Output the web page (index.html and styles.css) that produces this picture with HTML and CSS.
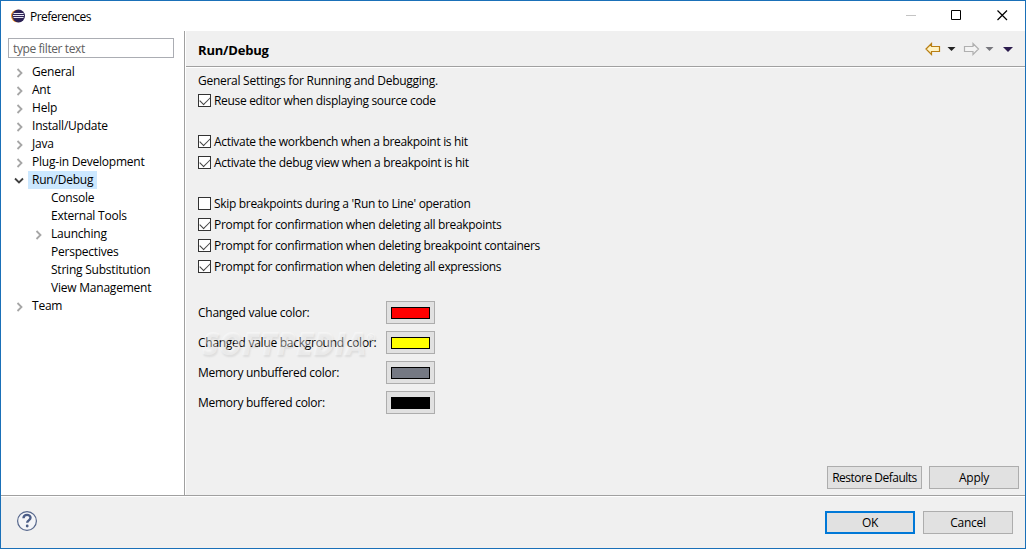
FILE: index.html
```html
<!DOCTYPE html>
<html lang="en">
<head>
    <meta charset="UTF-8">
    <meta name="viewport" content="width=device-width, initial-scale=1.0">
    <title>Preferences</title>
    <link rel="stylesheet" href="styles.css">
</head>
<body>
    <div class="window">
        <!-- Title bar -->
        <header class="titlebar">
            <svg class="app-icon" width="14" height="14" viewBox="0 0 14 14">
                <circle cx="6.3" cy="7" r="6.3" fill="#f0932b"/>
                <circle cx="7.6" cy="7" r="6.4" fill="#2c2255"/>
                <path d="M2.500 4.500h10M2 6.500h11M2.500 8.500h10" stroke="#e9e6f3" stroke-width="1"/>
            </svg>
            <span class="title">Preferences</span>
            <div class="window-controls">
                <svg width="46" height="30" viewBox="0 0 46 30"><path d="M18 14.500h10" stroke="#c4c4c4"/></svg>
                <svg width="46" height="30" viewBox="0 0 46 30"><path d="M17.500 9.500h9v9h-9z" fill="none" stroke="#000"/></svg>
                <svg width="46" height="30" viewBox="0 0 46 30"><path d="M17.500 9.500l9.500 9.500M27 9.500l-9.500 9.500" fill="none" stroke="#000" stroke-width="1.200"/></svg>
            </div>
        </header>

        <div class="main">
            <!-- Category tree -->
            <aside class="sidebar">
                <input class="filter" type="text" placeholder="type filter text">
                <ul class="tree">
                    <li><svg class="arrow" viewBox="0 0 8 10"><path d="M1.500 1l4 4-4 4"/></svg><span>General</span></li>
                    <li><svg class="arrow" viewBox="0 0 8 10"><path d="M1.500 1l4 4-4 4"/></svg><span>Ant</span></li>
                    <li><svg class="arrow" viewBox="0 0 8 10"><path d="M1.500 1l4 4-4 4"/></svg><span>Help</span></li>
                    <li><svg class="arrow" viewBox="0 0 8 10"><path d="M1.500 1l4 4-4 4"/></svg><span>Install/Update</span></li>
                    <li><svg class="arrow" viewBox="0 0 8 10"><path d="M1.500 1l4 4-4 4"/></svg><span>Java</span></li>
                    <li><svg class="arrow" viewBox="0 0 8 10"><path d="M1.500 1l4 4-4 4"/></svg><span>Plug-in Development</span></li>
                    <li><svg class="arrow open" viewBox="0 0 10 10"><path d="M1 2.500l4 4 4-4"/></svg><span class="selected">Run/Debug</span></li>
                    <li class="child"><span>Console</span></li>
                    <li class="child"><span>External Tools</span></li>
                    <li class="child"><svg class="arrow" viewBox="0 0 8 10"><path d="M1.500 1l4 4-4 4"/></svg><span>Launching</span></li>
                    <li class="child"><span>Perspectives</span></li>
                    <li class="child"><span>String Substitution</span></li>
                    <li class="child"><span>View Management</span></li>
                    <li><svg class="arrow" viewBox="0 0 8 10"><path d="M1.500 1l4 4-4 4"/></svg><span>Team</span></li>
                </ul>
            </aside>

            <!-- Preference page -->
            <section class="page">
                <div class="page-header">
                    <h1>Run/Debug</h1>
                    <svg class="nav" width="90" height="14" viewBox="0 0 90 14">
                        <path d="M1 7l5.500-5.500v3h8v5h-8v3z" fill="#fff3c4" stroke="#b97f14" stroke-width="1.200"/>
                        <path d="M22.500 5h8l-4 4z" fill="#222"/>
                        <path d="M53.500 7l-5.500-5.500v3h-8.500v5h8.500v3z" fill="#f4f4f4" stroke="#b0b0b0" stroke-width="1.200"/>
                        <path d="M60.500 5h8l-4 4z" fill="#77777d"/>
                        <path d="M78 5h10l-5 5z" fill="#2b1b4d"/>
                    </svg>
                </div>
                <div class="page-body">
                    <p>General Settings for Running and Debugging.</p>
                    <div class="options">
                        <label><input type="checkbox" checked>Reuse editor when displaying source code</label>
                    </div>
                    <div class="options">
                        <label><input type="checkbox" checked>Activate the workbench when a breakpoint is hit</label>
                        <label><input type="checkbox" checked>Activate the debug view when a breakpoint is hit</label>
                    </div>
                    <div class="options">
                        <label><input type="checkbox">Skip breakpoints during a 'Run to Line' operation</label>
                        <label><input type="checkbox" checked>Prompt for confirmation when deleting all breakpoints</label>
                        <label><input type="checkbox" checked>Prompt for confirmation when deleting breakpoint containers</label>
                        <label><input type="checkbox" checked>Prompt for confirmation when deleting all expressions</label>
                    </div>
                    <div class="colors">
                        <span>Changed value color:</span>
                        <button><i class="swatch red"></i></button>
                        <span>Changed value background color:</span>
                        <button><i class="swatch yellow"></i></button>
                        <span>Memory unbuffered color:</span>
                        <button><i class="swatch gray"></i></button>
                        <span>Memory buffered color:</span>
                        <button><i class="swatch black"></i></button>
                        <div class="watermark">SOFTPEDIA<sup>®</sup></div>
                    </div>
                    <div class="page-buttons">
                        <button class="restore">Restore Defaults</button>
                        <button>Apply</button>
                    </div>
                </div>
            </section>
        </div>

        <!-- Dialog buttons -->
        <footer class="footer">
            <svg class="help" width="22" height="22" viewBox="0 0 22 22">
                <circle cx="11" cy="11" r="9.400" fill="#f4f5f8" stroke="#56678c" stroke-width="1.200"/>
                <path d="M7.500 8.200c.2-4.400 7-4.200 7-.4 0 2.600-3.300 2.600-3.300 5" fill="none" stroke="#4b5d87" stroke-width="2.400"/>
                <circle cx="11.200" cy="16" r="1.400" fill="#4b5d87"/>
            </svg>
            <button class="default">OK</button>
            <button>Cancel</button>
        </footer>
    </div>
</body>
</html>
```
FILE: styles.css
```css
* {
    margin: 0;
    padding: 0;
    box-sizing: border-box;
}

body {
    font-family: "Open Sans", "Noto Sans", sans-serif;
    font-size: 12px;
    letter-spacing: -0.27px;
    color: #000;
    overflow: hidden;
}

.window {
    display: flex;
    flex-direction: column;
    width: 100vw;
    height: 100vh;
    border: 1px solid #1a70b8;
    background-color: #f0f0f0;
}

.titlebar {
    display: flex;
    align-items: center;
    height: 30px;
    padding-left: 10px;
    background-color: #fff;
}

.title {
    margin-left: 5px;
    letter-spacing: -0.55px;
}

.window-controls {
    display: flex;
    margin-left: auto;
    margin-right: -1px;
}

.main {
    display: flex;
    flex: 1;
    border-bottom: 1px solid #a0a0a0;
}

.sidebar {
    width: 184px;
    padding: 7px 0 0 7px;
    border-right: 1px solid #a0a0a0;
    background-color: #fff;
}

.filter {
    display: block;
    width: 166px;
    height: 20px;
    padding-left: 4px;
    border: 1px solid #abadb3;
    font: inherit;
    letter-spacing: -0.4px;
}

.filter::placeholder {
    color: #606060;
}

.tree {
    margin-top: 5px;
    list-style: none;
    letter-spacing: -0.22px;
}

.tree li {
    display: flex;
    align-items: center;
    height: 18px;
    padding-left: 20px;
    line-height: 18px;
}

.tree li.child {
    padding-left: 39px;
}

.tree span {
    padding: 0 4px;
}

.tree .selected {
    background-color: #cce8ff;
}

.arrow {
    width: 8px;
    height: 10px;
    margin: 2px 4px 0 -12px;
    fill: none;
    stroke: #a6a6a6;
    stroke-width: 1.8;
}

.arrow.open {
    width: 10px;
    margin-left: -14px;
    stroke: #404040;
}

.page {
    display: flex;
    flex-direction: column;
    flex: 1;
    border-left: 1px solid #fff;
}

.page-header {
    display: flex;
    align-items: center;
    justify-content: space-between;
    height: 36px;
    padding: 0 10px 0 12px;
    border-bottom: 1px solid #a0a0a0;
}

.page-header h1 {
    margin-top: 3px;
    font-size: 13px;
    letter-spacing: -0.2px;
}

.page-body {
    display: flex;
    flex-direction: column;
    flex: 1;
    padding: 4px 6px 6px 12px;
    border-top: 1px solid #fff;
}

.page-body p {
    height: 18px;
    line-height: 17px;
}

.options {
    margin-bottom: 20px;
    letter-spacing: -0.32px;
}

.options label {
    display: flex;
    align-items: center;
    height: 21px;
}

.options input {
    appearance: none;
    width: 13px;
    height: 13px;
    margin-right: 3px;
    border: 1px solid #333;
    background-color: #fff;
}

.options input:checked::before {
    content: "";
    display: block;
    width: 9px;
    height: 5px;
    margin: 2px 0 0 1px;
    border: solid #444;
    border-width: 0 0 1.4px 1.4px;
    transform: translateY(-0.5px) rotate(-45deg);
}

.colors {
    display: grid;
    position: relative;
    grid-template-columns: 188px 49px;
    grid-auto-rows: 23px;
    row-gap: 7px;
    align-items: center;
    margin-top: 4px;
    letter-spacing: -0.27px;
}

button {
    width: 90px;
    height: 23px;
    border: 1px solid #adadad;
    background-color: #e1e1e1;
    font: inherit;
    letter-spacing: inherit;
}

.colors button {
    display: flex;
    align-items: center;
    justify-content: center;
    width: 49px;
}

.swatch {
    width: 39px;
    height: 12px;
    border: 1px solid #000;
}

.red {
    background-color: #ff0000;
}

.yellow {
    background-color: #ffff00;
}

.gray {
    background-color: #757983;
}

.black {
    background-color: #000;
}

.watermark {
    position: absolute;
    top: 27px;
    left: 4px;
    color: rgba(255, 255, 255, 0.4);
    font-size: 31px;
    font-weight: 800;
    font-style: italic;
    letter-spacing: 0;
    line-height: 30px;
    text-shadow: 1px 2px 2px rgba(0, 0, 0, 0.08);
    pointer-events: none;
}

.watermark sup {
    font-size: 11px;
    vertical-align: 14px;
    line-height: 0;
}

.page-buttons {
    display: flex;
    justify-content: flex-end;
    gap: 7px;
    margin-top: auto;
}

.page-buttons .restore {
    width: 95px;
    letter-spacing: -0.5px;
}

.footer {
    display: flex;
    align-items: center;
    gap: 8px;
    height: 52px;
    padding: 0 12px 0 15px;
    border-top: 1px solid #fff;
}

.footer .help {
    margin: 0 auto 3px 0;
}

.footer .default {
    border: 2px solid #0078d7;
}
```
